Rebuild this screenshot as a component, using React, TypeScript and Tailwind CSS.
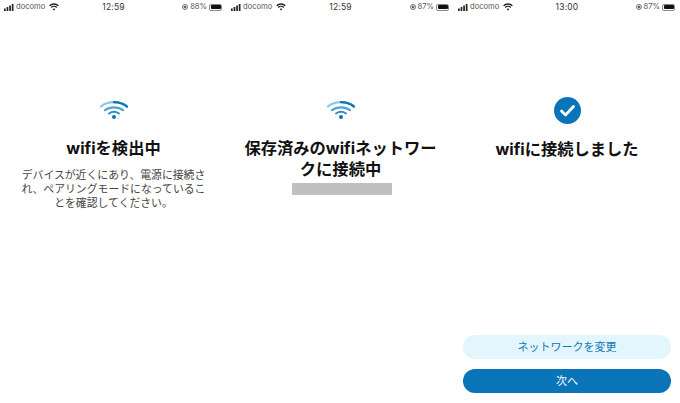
import React from 'react';

const StatusBar = ({ time, battery }: { time: string; battery: number }) => (
  <div className="relative mt-[1px] flex h-[12px] items-center justify-between pl-[4px] pr-[5px] text-[7.6px] leading-[12px] text-[#555]">
    <div className="flex items-center">
      <svg width="10" height="7" viewBox="0 0 10 7" fill="#222">
        <rect x="0" y="4.5" width="1.7" height="2.5" />
        <rect x="2.6" y="3" width="1.7" height="4" />
        <rect x="5.2" y="1.5" width="1.7" height="5.5" />
        <rect x="7.8" y="0" width="1.7" height="7" />
      </svg>
      <span className="ml-[2px]">docomo</span>
      <svg className="ml-[4px]" width="10" height="8" viewBox="0 0 10 8" fill="none" stroke="#222" strokeWidth="1.3">
        <path d="M.6 2.8a6.3 6.3 0 0 1 8.8 0" />
        <path d="M2.2 4.5a4 4 0 0 1 5.6 0" />
        <path d="M5 7.6 3.6 6.1a2 2 0 0 1 2.8 0Z" fill="#222" stroke="none" />
      </svg>
    </div>
    <span className="absolute left-0 right-0 text-center text-[8.5px] tracking-[0.2px] text-[#333]">{time}</span>
    <div className="flex items-center">
      <svg width="6" height="6" viewBox="0 0 6 6" fill="none" stroke="#555" strokeWidth="0.8">
        <circle cx="3" cy="3" r="2.5" />
        <circle cx="3" cy="3" r="1" fill="#555" />
      </svg>
      <span className="ml-[2px]">{battery}%</span>
      <div className="ml-[2px] flex h-[7px] w-[13px] rounded-[2px] border border-[#888] p-[0.5px]">
        <div className="h-full w-[10px] rounded-[1px] bg-[#111]" />
      </div>
    </div>
  </div>
);

const WifiIcon = () => (
  <svg width="28" height="18" viewBox="0 0 28 18" fill="none" strokeLinecap="round">
    <path d="M1 5.5C8 -.3 20 -.3 27 5.5" stroke="#8cc6e8" strokeWidth="2.2" />
    <path d="M14 1.2C18.5 1.2 23 2.5 27 5.5" stroke="#0a74b9" strokeWidth="2.2" />
    <path d="M5 9.2C10 5.3 18 5.3 23 9.2" stroke="#4fa3d8" strokeWidth="2.2" />
    <path d="M9 12.5C12 10.5 16 10.5 19 12.5" stroke="#2a8cca" strokeWidth="2" />
    <circle cx="14" cy="16" r="2" fill="#0a74b9" />
  </svg>
);

const CheckIcon = () => (
  <svg width="27" height="27" viewBox="0 0 27 27">
    <circle cx="13.5" cy="13.5" r="13.5" fill="#0a74b9" />
    <path d="M7.5 14l4 4 8-8.5" fill="none" stroke="#fff" strokeWidth="2.8" strokeLinecap="round" strokeLinejoin="round" />
  </svg>
);

export default function App() {
  return (
    <div className="grid h-[403px] w-[680px] grid-cols-[227px_227px_226px] overflow-hidden bg-white font-['Inter','Noto_Sans_CJK_JP',sans-serif]">
      <div className="flex flex-col">
        <StatusBar time="12:59" battery={88} />
        <div className="mt-[88px] flex h-[18px] justify-center"><WifiIcon /></div>
        <h2 className="mt-[19px] text-center text-[16.3px] font-bold leading-[21px] text-[#111]">wifiを検出中</h2>
        <p className="mt-[9px] px-[21px] text-center text-[10.85px] leading-[14px] text-[#444]">
          デバイスが近くにあり、電源に接続され、ペアリングモードになっていることを確認してください。
        </p>
      </div>
      <div className="flex flex-col">
        <StatusBar time="12:59" battery={87} />
        <div className="mt-[88px] flex h-[18px] justify-center"><WifiIcon /></div>
        <h2 className="mt-[19px] px-[14px] text-center text-[16.3px] font-bold leading-[21px] text-[#111]">
          保存済みのwifiネットワークに接続中
        </h2>
        <div className="ml-[65px] mt-[3px] h-[12px] w-[100px] bg-[#c0c0c0]" />
      </div>
      <div className="flex flex-col">
        <StatusBar time="13:00" battery={87} />
        <div className="mt-[84px] flex h-[27px] justify-center"><CheckIcon /></div>
        <h2 className="mt-[15px] text-center text-[16.3px] font-bold leading-[21px] text-[#111]">wifiに接続しました</h2>
        <div className="mt-auto flex flex-col gap-[10px] pb-[10px] pl-[9px] pr-[9px]">
          <button className="h-[24px] rounded-full bg-[#e3f5fd] text-[11px] text-[#1578b5]">ネットワークを変更</button>
          <button className="h-[24px] rounded-full bg-[#0a74b9] text-[11px] text-white">次へ</button>
        </div>
      </div>
    </div>
  );
}
